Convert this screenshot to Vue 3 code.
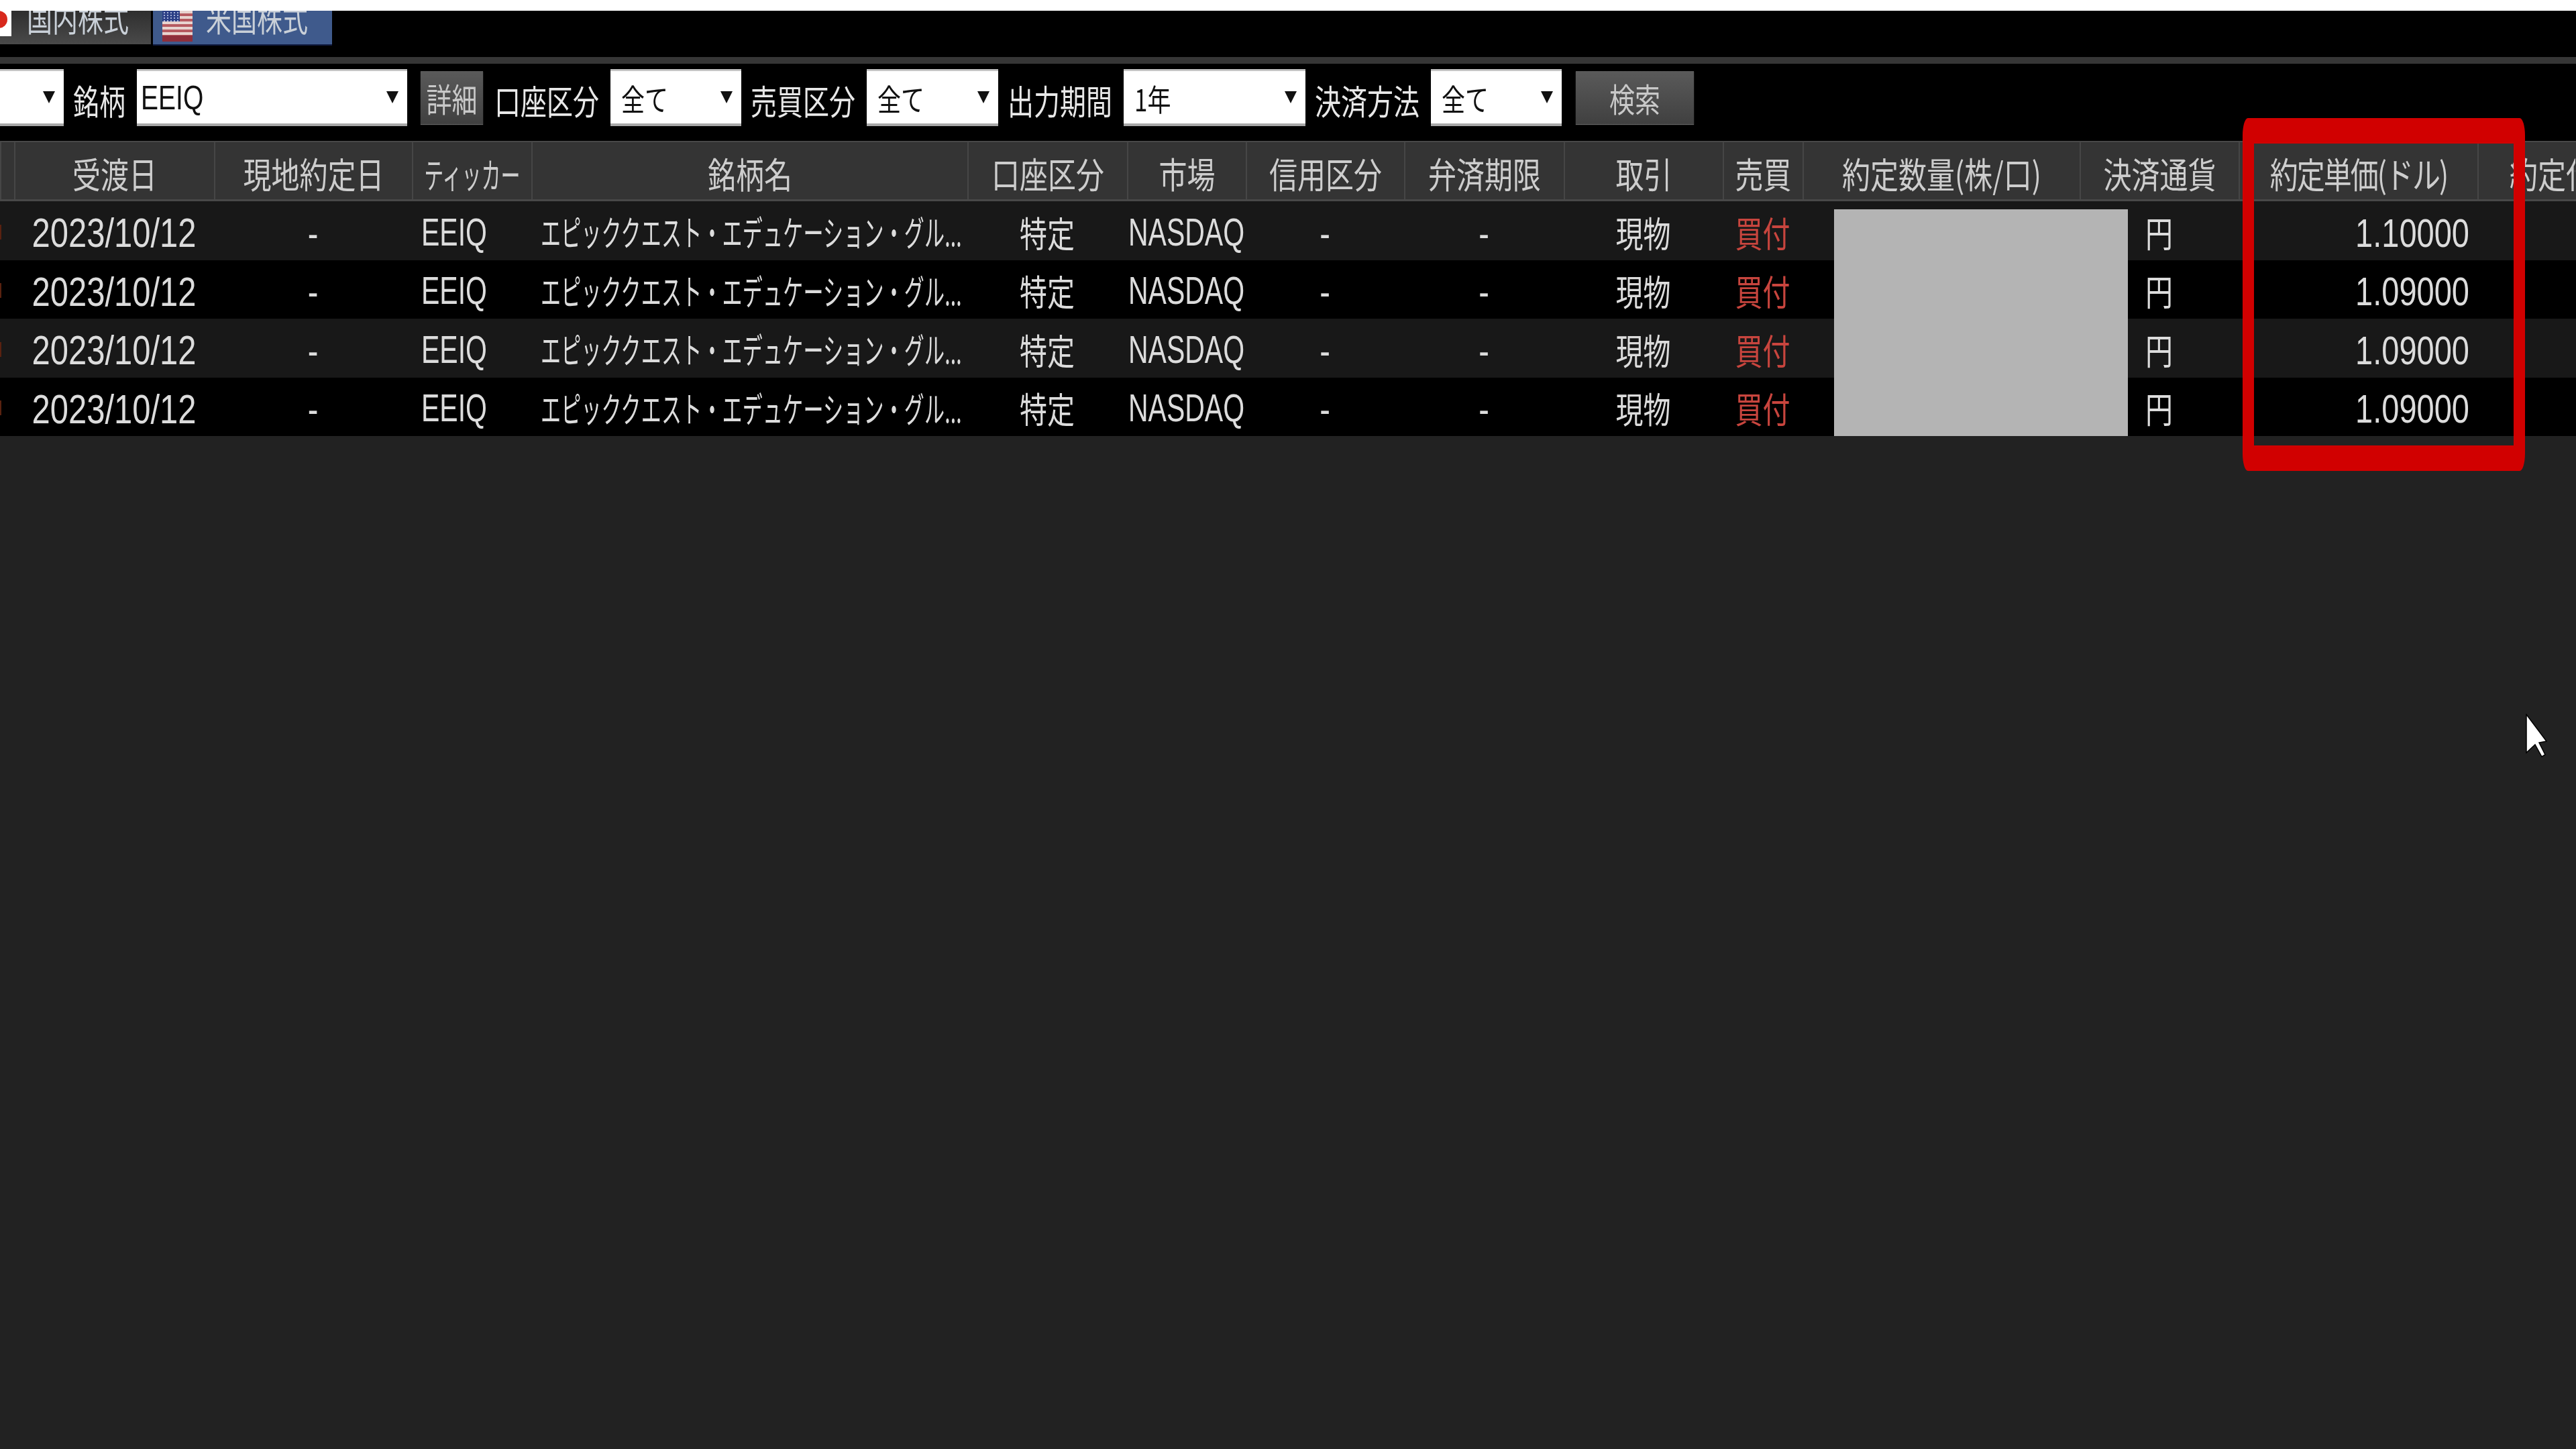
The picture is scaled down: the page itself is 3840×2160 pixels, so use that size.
<template>
  <div class="page">
    <div class="screen">
      <div class="top-strip"></div>

      <div class="tabs">
        <div class="tab jp">
          <span class="flag-jp"><i></i></span>
          <span class="txt">国内株式</span>
        </div>
        <div class="tab us">
          <svg class="flag-us" viewBox="0 0 45 46" width="45" height="46">
            <rect width="45" height="46" fill="#e8d4d0" />
            <rect v-for="y in [0, 8, 16, 24, 32]" :key="y" y="0" width="45" height="4" :transform="`translate(0 ${y + 4})`" fill="#b65a60" />
            <rect y="37" width="45" height="9" fill="#8e2f3c" />
            <rect width="26" height="16" fill="#2c3f86" />
            <circle v-for="s in stars" :key="s[0] + '-' + s[1]" :cx="s[0]" :cy="s[1]" r="1" fill="#cfd8f0" />
          </svg>
          <span class="txt">米国株式</span>
        </div>
      </div>

      <div class="divider"></div>

      <div class="toolbar">
        <div class="select" style="width: 95px"><span class="caret"></span></div>
        <span class="label"><span>銘柄</span></span>
        <div class="select latin" style="width: 403px"><span class="val">EEIQ</span><span class="caret"></span></div>
        <button class="btn detail"><span>詳細</span></button>
        <span class="label"><span>口座区分</span></span>
        <div class="select" style="width: 195px"><span class="val">全て</span><span class="caret"></span></div>
        <span class="label"><span>売買区分</span></span>
        <div class="select" style="width: 196px"><span class="val">全て</span><span class="caret"></span></div>
        <span class="label"><span>出力期間</span></span>
        <div class="select" style="width: 271px"><span class="val">1年</span><span class="caret"></span></div>
        <span class="label"><span>決済方法</span></span>
        <div class="select" style="width: 195px"><span class="val">全て</span><span class="caret"></span></div>
        <button class="btn search"><span>検索</span></button>
      </div>

      <div class="grid-row head">
        <div v-for="(h, i) in headers" :key="i" class="hcell" :class="h.cls">
          <span>{{ h.text }}</span>
        </div>
      </div>

      <div v-for="(r, i) in rows" :key="i" class="grid-row body-row" :class="{ odd: i % 2 === 0 }">
        <div class="cell"><i class="mark"></i></div>
        <div class="cell num date"><span>2023/10/12</span></div>
        <div class="cell num"><span>-</span></div>
        <div class="cell caps left"><span>EEIQ</span></div>
        <div class="cell kana left"><span>エピッククエスト・エデュケーション・グル...</span></div>
        <div class="cell"><span>特定</span></div>
        <div class="cell caps"><span>NASDAQ</span></div>
        <div class="cell num"><span>-</span></div>
        <div class="cell num"><span>-</span></div>
        <div class="cell"><span>現物</span></div>
        <div class="cell buy"><span>買付</span></div>
        <div class="cell"></div>
        <div class="cell"><span>円</span></div>
        <div class="cell num right"><span>{{ r }}</span></div>
        <div class="cell"></div>
      </div>
    </div>

    <div class="mask"></div>
    <div class="highlight"></div>
    <svg class="cursor" viewBox="0 0 34 66" width="34" height="66">
      <path d="M2 1 L2 58 L15 46 L25 64 L30 61 L21 43 L32 41 Z" fill="#fff" stroke="#000" stroke-width="1.5" />
    </svg>
  </div>
</template>

<script setup>
const headers = [
  { text: '' },
  { text: '受渡日' },
  { text: '現地約定日' },
  { text: 'ティッカー', cls: 'kana' },
  { text: '銘柄名' },
  { text: '口座区分' },
  { text: '市場' },
  { text: '信用区分' },
  { text: '弁済期限' },
  { text: '取引' },
  { text: '売買' },
  { text: '約定数量(株/口)' },
  { text: '決済通貨' },
  { text: '約定単価(ドル)', cls: 'tight' },
  { text: '約定代金(円)', cls: 'clip' }
]

const rows = ['1.10000', '1.09000', '1.09000', '1.09000']

const stars = []
for (let y = 3; y < 16; y += 4) {
  for (let x = 3; x < 26; x += 5) stars.push([x, y])
}
</script>

<style scoped>
.page {
  position: relative;
  width: 3840px;
  height: 2160px;
  overflow: hidden;
  background: #222;
  font-family: "Liberation Sans", "Noto Sans CJK JP", sans-serif;
  color: #d6d6d6;
}

.screen {
  filter: blur(0.7px);
}

.top-strip {
  height: 16px;
  background: #fff;
}

.tabs {
  display: flex;
  gap: 3px;
  height: 69px;
  background: #000;
  align-items: flex-start;
}

.tab {
  display: flex;
  align-items: flex-end;
  height: 50px;
  overflow: hidden;
  font-size: 38px;
  font-family: "Noto Sans CJK JP", sans-serif;
  color: #c9d0d8;
}

.tab .txt {
  display: block;
  line-height: 50px;
  transform: scaleY(1.3);
  transform-origin: bottom;
  margin-bottom: 7px;
}

.tab.jp {
  width: 225px;
  background: linear-gradient(#2e2e2e, #4a4a4a);
}

.flag-jp {
  position: relative;
  display: block;
  width: 17px;
  height: 38px;
  margin: 0 23px 12px 0;
  background: #fff;
  overflow: hidden;
  flex: none;
}

.flag-jp i {
  position: absolute;
  left: -15px;
  top: 0;
  width: 26px;
  height: 26px;
  border-radius: 50%;
  background: #d8291c;
}

.tab.us {
  width: 267px;
  background: #3f5a8c;
  box-shadow: 0 2px 0 #101a40;
  height: 50px;
}

.flag-us {
  flex: none;
  margin: 0 20px 4px 14px;
}

.divider {
  height: 10px;
  background: #363636;
}

.toolbar {
  display: flex;
  align-items: center;
  height: 115px;
  box-sizing: border-box;
  padding-bottom: 14px;
  background: #000;
}

.select {
  position: relative;
  display: flex;
  align-items: center;
  flex: none;
  height: 85px;
  box-sizing: border-box;
  padding-left: 16px;
  background: #fff;
  color: #111;
  font-family: "Noto Sans CJK JP", sans-serif;
  font-size: 35px;
  box-shadow: inset 0 3px 0 #c4c4c4, inset 0 -4px 0 #a8a8a8;
}

.select.latin {
  padding-left: 6px;
  font-family: "Liberation Sans", sans-serif;
  font-size: 39px;
}

.val {
  display: block;
  transform: scaleY(1.3);
}

.caret {
  position: absolute;
  right: 13px;
  top: 33px;
  width: 0;
  height: 0;
  border-left: 9px solid transparent;
  border-right: 9px solid transparent;
  border-top: 18px solid #111;
}

.label {
  flex: none;
  margin: 0 17px 0 14px;
  font-family: "Noto Sans CJK JP", sans-serif;
  font-size: 39px;
  color: #e8e8e8;
  padding-top: 6px;
}

.label span,
.btn span {
  display: block;
  transform: scaleY(1.3);
}

.btn {
  flex: none;
  height: 79px;
  border: none;
  padding: 0;
  font-family: "Noto Sans CJK JP", sans-serif;
  font-size: 38px;
  color: #c8c8c8;
  background: linear-gradient(#5a5a5a, #404040);
  box-shadow: 0 1px 1px #666;
}

.btn.detail {
  width: 93px;
  margin-left: 20px;
  margin-right: 3px;
}

.btn.search {
  width: 176px;
  margin-left: 21px;
}

.grid-row {
  display: grid;
  grid-template-columns: 21px 298px 295px 178px 650px 238px 177px 236px 238px 237px 119px 413px 237px 356px 146px;
}

.head {
  height: 90px;
  box-sizing: border-box;
  background: #343434;
  border-top: 2px solid #484848;
  border-bottom: 3px solid #484848;
}

.hcell {
  display: flex;
  align-items: center;
  justify-content: center;
  overflow: hidden;
  box-sizing: border-box;
  border-left: 2px solid #464646;
  font-family: "Noto Sans CJK JP", sans-serif;
  font-size: 42px;
  color: #cdcdcd;
  white-space: nowrap;
  padding-top: 6px;
}

.hcell span {
  display: block;
  transform: scaleY(1.27);
}

.hcell.kana {
  font-size: 29px;
}

.hcell.kana span {
  transform: scaleY(1.8);
}

.hcell.tight {
  letter-spacing: -2px;
}

.hcell.clip {
  justify-content: flex-start;
  padding-left: 46px;
}

.body-row {
  height: 87.5px;
  background: #000;
}

.body-row.odd {
  background: #181818;
}

.cell {
  display: flex;
  align-items: center;
  justify-content: center;
  white-space: nowrap;
  overflow: hidden;
  padding-top: 4px;
  font-family: "Noto Sans CJK JP", sans-serif;
  font-size: 41px;
  color: #dcdcdc;
}

.cell span {
  display: block;
  transform: scaleY(1.3);
}

.cell.num {
  padding-top: 7px;
  font-family: "Liberation Sans", sans-serif;
  font-size: 47px;
}

.cell.date {
  font-size: 49px;
}

.cell.num span {
  transform: scaleY(1.25);
}

.cell.caps {
  padding-top: 7px;
  font-family: "Liberation Sans", sans-serif;
  font-size: 41px;
}

.cell.caps span {
  transform: scaleY(1.4);
}

.cell.kana {
  padding-top: 1px;
  font-size: 30px;
  letter-spacing: 0.2px;
}

.cell.kana span {
  transform: scaleY(1.75);
}

.cell.left {
  justify-content: flex-start;
  padding-left: 14px;
}

.cell.right {
  justify-content: flex-end;
  padding-right: 12px;
}

.cell.buy {
  color: #c8453e;
}

.mark {
  display: block;
  width: 2px;
  height: 22px;
  margin-right: 19px;
  background: #5a2210;
}

.mask {
  position: absolute;
  left: 2734px;
  top: 312px;
  width: 438px;
  height: 338px;
  background: #b4b4b4;
}

.highlight {
  position: absolute;
  left: 3343px;
  top: 176px;
  width: 421px;
  height: 526px;
  box-sizing: border-box;
  border: solid #d10000;
  border-width: 38px 17px;
  border-radius: 8px / 26px;
}

.cursor {
  position: absolute;
  left: 3764px;
  top: 1064px;
}
</style>

<style>
html,
body {
  margin: 0;
  background: #222;
  overflow: hidden;
}
</style>
